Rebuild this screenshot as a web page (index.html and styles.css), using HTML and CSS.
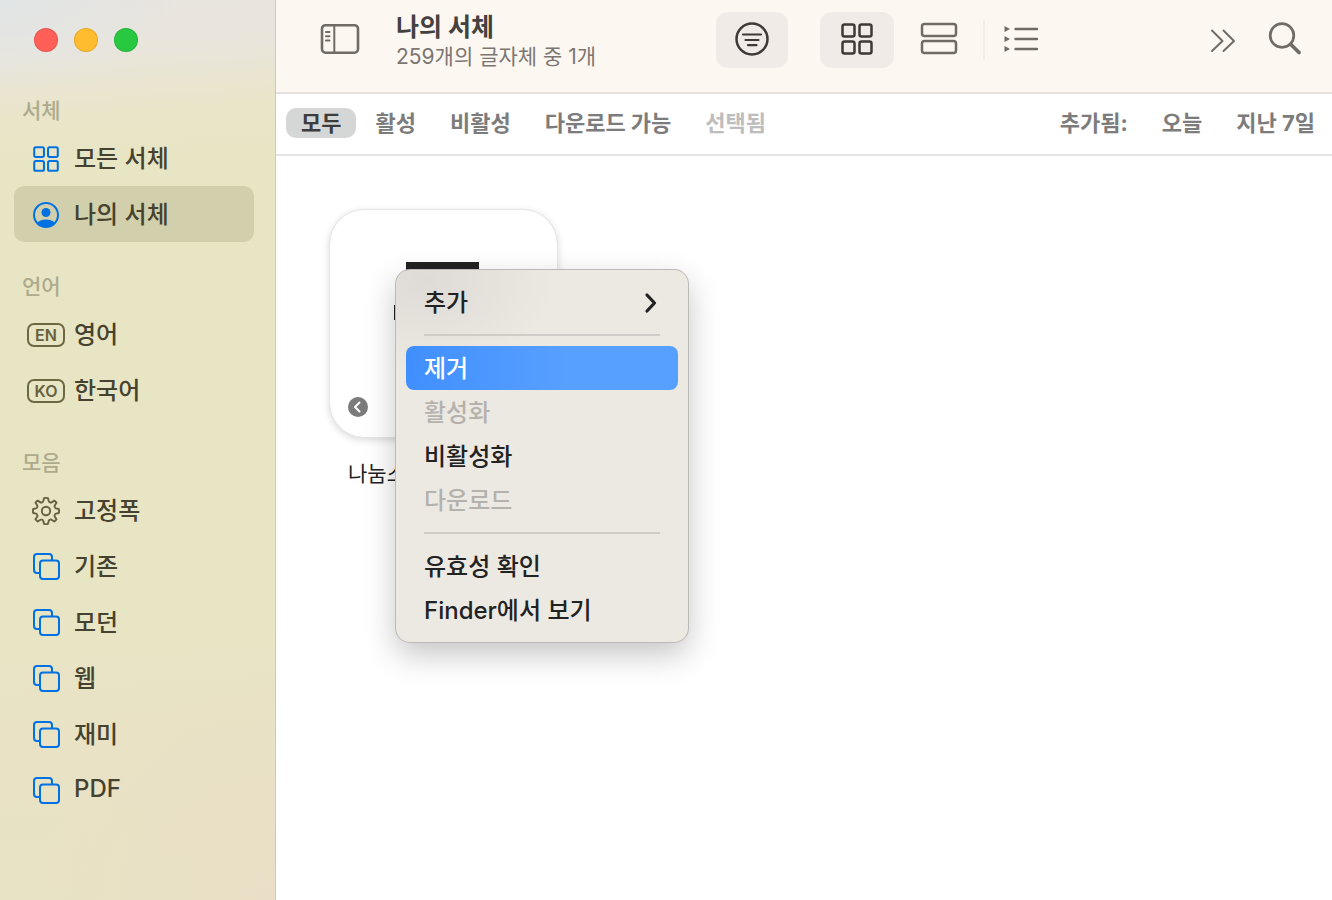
FILE: index.html
```html
<!DOCTYPE html>
<html lang="ko">
<head>
<meta charset="utf-8">
<meta name="viewport" content="width=device-width, initial-scale=1">
<title>나의 서체</title>
<link rel="stylesheet" href="styles.css">
</head>
<body>
<svg class="defs" width="0" height="0" aria-hidden="true">
  <symbol id="grid" viewBox="0 0 32 32">
    <rect x="1.5" y="1.5" width="12" height="12" rx="2"/><rect x="18.5" y="1.5" width="12" height="12" rx="2"/>
    <rect x="1.5" y="18.5" width="12" height="12" rx="2"/><rect x="18.5" y="18.5" width="12" height="12" rx="2"/>
  </symbol>
  <symbol id="stack" viewBox="0 0 28 28">
    <path d="M7 20H5A3 3 0 0 1 2 17V4A3 3 0 0 1 5 1H17A3 3 0 0 1 20 4V7"/>
    <rect x="8" y="7.500" width="19" height="18.500" rx="3"/>
  </symbol>
</svg>
<div class="window">
  <aside class="sidebar">
    <div class="lights">
      <button class="light close" aria-label="닫기"></button>
      <button class="light minimize" aria-label="최소화"></button>
      <button class="light expand" aria-label="확대"></button>
    </div>
    <nav class="nav">
      <section class="group">
        <h2 class="group-title">서체</h2>
        <a class="item" href="#"><span class="item-icon blue"><svg width="26" height="26" stroke-width="2.500"><use href="#grid"/></svg></span><span class="label">모든 서체</span></a>
        <a class="item selected" href="#" aria-current="page"><span class="item-icon blue"><svg width="26" height="26" viewBox="0 0 26 26" stroke-width="2"><circle cx="13" cy="13" r="12"/><g class="solid"><circle cx="13" cy="10.500" r="4.500"/><path d="M4 21C6 18.500 9.500 17.500 13 17.500S20 18.500 22 21C19.500 24 16.500 25.300 13 25.300S6.500 24 4 21Z"/></g></svg></span><span class="label">나의 서체</span></a>
      </section>
      <section class="group">
        <h2 class="group-title">언어</h2>
        <a class="item" href="#"><span class="item-icon"><span class="lang">EN</span></span><span class="label">영어</span></a>
        <a class="item" href="#"><span class="item-icon"><span class="lang">KO</span></span><span class="label">한국어</span></a>
      </section>
      <section class="group">
        <h2 class="group-title">모음</h2>
        <a class="item" href="#"><span class="item-icon olive"><svg width="28" height="28" viewBox="0 0 28 28" stroke-width="1.900"><circle cx="14" cy="14" r="4.200"/><path d="M12 1.200Q14 .6 16 1.200L16.700 4Q17 5 18 5.400T20 5.100L22.300 3.600Q23.800 4.600 24.500 5.700L23 8Q22.300 9 22.700 10T24 11.300L26.800 12Q27.400 14 26.800 16L24 16.700Q23 17 22.700 18T23 20L24.500 22.300Q23.600 23.700 22.300 24.500L20 23Q19 22.300 18 22.700T16.700 24L16 26.800Q14 27.400 12 26.800L11.300 24Q11 23 10 22.700T8 23L5.700 24.500Q4.300 23.600 3.500 22.300L5 20Q5.700 19 5.300 18T4 16.700L1.200 16Q.6 14 1.200 12L4 11.300Q5 11 5.300 10T5 8L3.500 5.700Q4.400 4.300 5.700 3.600L8 5.100Q9 5.800 10 5.400T11.300 4Z"/></svg></span><span class="label">고정폭</span></a>
        <a class="item" href="#"><span class="item-icon blue"><svg width="28" height="28" stroke-width="2"><use href="#stack"/></svg></span><span class="label">기존</span></a>
        <a class="item" href="#"><span class="item-icon blue"><svg width="28" height="28" stroke-width="2"><use href="#stack"/></svg></span><span class="label">모던</span></a>
        <a class="item" href="#"><span class="item-icon blue"><svg width="28" height="28" stroke-width="2"><use href="#stack"/></svg></span><span class="label">웹</span></a>
        <a class="item" href="#"><span class="item-icon blue"><svg width="28" height="28" stroke-width="2"><use href="#stack"/></svg></span><span class="label">재미</span></a>
        <a class="item" href="#"><span class="item-icon blue"><svg width="28" height="28" stroke-width="2"><use href="#stack"/></svg></span><span class="label">PDF</span></a>
      </section>
    </nav>
  </aside>
  <main class="main">
    <header class="toolbar">
      <button class="tool small" aria-label="사이드바"><svg width="40" height="32" viewBox="0 0 40 32" stroke-width="2.600"><rect x="2" y="2.200" width="36" height="27.500" rx="3.500"/><path stroke-width="2" d="M14.300 2.500V29.500M6 9h3.500M6 13.200h3.500M6 17.400h3.500"/></svg></button>
      <div class="heading">
        <h1 class="title">나의 서체</h1>
        <p class="subtitle">259개의 글자체 중 1개</p>
      </div>
      <button class="tool filter on" aria-label="필터"><svg width="34" height="34" viewBox="0 0 34 34" stroke-width="2.500"><circle cx="17" cy="17" r="15.500"/><path stroke-width="2.200" d="M8 12.500h18M10.500 18h13M13 23.200h8.500"/></svg></button>
      <div class="views">
        <button class="tool on" aria-label="격자" aria-pressed="true"><svg width="32" height="32" stroke-width="2.500"><use href="#grid"/></svg></button>
        <button class="tool" aria-label="샘플"><svg width="38" height="34" viewBox="0 0 38 34" stroke-width="2.500"><rect x="2" y="2" width="34" height="12" rx="2.500"/><rect x="2" y="19" width="34" height="12" rx="2.500"/></svg></button>
        <span class="divider"></span>
        <button class="tool" aria-label="목록"><svg width="36" height="28" viewBox="0 0 36 28" stroke-width="2.400"><path d="M11.500 4h21.500M11.500 14h21.500M11.500 24h21.500"/><path class="solid" d="M.5 1 6 4 .5 7ZM.5 11 6 14l-5.500 3ZM.5 21 6 24l-5.500 3Z"/></svg></button>
      </div>
      <button class="tool small more" aria-label="더 보기"><svg width="26" height="26" viewBox="0 0 26 26" stroke-width="2"><path d="M2 4.500 12.500 15 2 25M13.500 4.500 24 15 13.500 25"/></svg></button>
      <button class="tool small" aria-label="검색"><svg width="34" height="34" viewBox="0 0 34 34" stroke-width="2.700"><circle cx="14" cy="13.500" r="11.800"/><path stroke-width="3.700" d="m22.700 22.200 8.300 8.300"/></svg></button>
    </header>
    <div class="filters">
      <button class="chip active" aria-pressed="true">모두</button>
      <button class="chip">활성</button>
      <button class="chip">비활성</button>
      <button class="chip">다운로드 가능</button>
      <button class="chip" disabled>선택됨</button>
      <span class="chip added">추가됨:</span>
      <button class="chip">오늘</button>
      <button class="chip">지난 7일</button>
    </div>
    <div class="content">
      <figure class="font">
        <div class="preview">
          <svg class="sample" width="100" height="60" viewBox="0 0 100 60"><path d="M12 0H85V16H12ZM0 43H97V58H0Z"/></svg>
          <svg class="badge" width="20" height="20" viewBox="0 0 20 20"><circle cx="10" cy="10" r="10"/><path d="m11.500 5.500-4.500 4.500 4.500 4.500"/></svg>
        </div>
        <figcaption class="caption">나눔스퀘어</figcaption>
      </figure>
      <div class="menu" role="menu">
        <button class="entry" role="menuitem"><span class="label">추가</span><svg width="16" height="20" viewBox="0 0 16 20" stroke-width="3.200"><path d="m3 3 7.500 8L3 19"/></svg></button>
        <hr class="rule">
        <button class="entry chosen" role="menuitem"><span class="label">제거</span></button>
        <button class="entry" role="menuitem" disabled><span class="label">활성화</span></button>
        <button class="entry" role="menuitem"><span class="label">비활성화</span></button>
        <button class="entry" role="menuitem" disabled><span class="label">다운로드</span></button>
        <hr class="rule">
        <button class="entry" role="menuitem"><span class="label">유효성 확인</span></button>
        <button class="entry" role="menuitem"><span class="label">Finder에서 보기</span></button>
      </div>
    </div>
  </main>
</div>
</body>
</html>
```
FILE: styles.css
```css
* { box-sizing: border-box; }

body {
  margin: 0;
  font-family: Inter, "Noto Sans CJK KR", sans-serif;
  font-size: 24px;
  color: #222;
}

button {
  margin: 0;
  padding: 0;
  border: 0;
  background: none;
  font: inherit;
  color: inherit;
}

h1, h2, p, figure { margin: 0; }

svg {
  display: block;
  fill: none;
  stroke: currentColor;
  stroke-linecap: round;
  stroke-linejoin: round;
  overflow: visible;
}

.defs { position: absolute; }
.solid { fill: currentColor; stroke: none; }
.label { padding-bottom: 3px; }

.window {
  display: flex;
  min-height: 100vh;
}

/* Sidebar */
.sidebar {
  flex: 0 0 276px;
  border-right: 1px solid #cfcda6;
  background:
    radial-gradient(ellipse 180px 90px at 0 0, #e1e5e5 0%, rgba(225, 229, 229, 0) 100%),
    radial-gradient(ellipse 240px 220px at 100% 100%, #eadfc6 0%, rgba(234, 223, 198, 0) 100%),
    linear-gradient(176deg, #e8e4e0 0, #e9e5db 60px, #e9e5c9 120px, #e8e5c4 180px, #e8e5c4 620px, #e9e2c5 740px, #e8e3c5 100%);
}

.lights {
  display: flex;
  gap: 16px;
  padding: 28px 34px 26px;
}

.light {
  width: 24px;
  height: 24px;
  border: 1px solid rgba(0, 0, 0, 0.1);
  border-radius: 50%;
}

.close { background: #ff5f57; }
.minimize { background: #febc2e; }
.expand { background: #28c840; }

.nav {
  display: flex;
  flex-direction: column;
  gap: 24px;
  padding: 12px 21px 0 14px;
}

.group-title {
  padding: 2px 8px 0;
  font-size: 21px;
  font-weight: 500;
  line-height: 38px;
  color: #aeaa8c;
}

.item {
  display: flex;
  align-items: center;
  height: 56px;
  padding-left: 12px;
  border-radius: 10px;
  font-weight: 500;
  color: #45422f;
  text-decoration: none;
}

.selected { background: #d2cfad; }

.item-icon {
  display: flex;
  justify-content: center;
  width: 40px;
  padding-top: 2px;
  margin-right: 8px;
}

.blue { color: #0071e3; }
.olive { color: #66613f; }

.lang {
  width: 38px;
  border: 2px solid #6d6844;
  border-radius: 7px;
  font-size: 16px;
  font-weight: 600;
  line-height: 20px;
  text-align: center;
  color: #66613f;
}

/* Toolbar */
.main {
  flex: 1;
  display: flex;
  flex-direction: column;
  min-width: 0;
  background: #fff;
}

.toolbar {
  display: flex;
  align-items: flex-start;
  height: 94px;
  padding: 12px 19px 0 36px;
  border-bottom: 2px solid #e4e1de;
  background: #fdf7f1;
}

.tool {
  display: flex;
  align-items: center;
  justify-content: center;
  width: 74px;
  height: 56px;
  padding-bottom: 2px;
  border-radius: 12px;
  color: #716b66;
}

.small { width: 56px; }
.filter { width: 72px; margin-right: 32px; }
.on { background: #f0ebe6; color: #3c3936; }

.heading {
  flex: 0 1 320px;
  margin-left: 28px;
  white-space: nowrap;
}

.title {
  font-size: 25px;
  font-weight: 700;
  line-height: 30px;
  color: #444240;
}

.subtitle {
  font-size: 21px;
  line-height: 30px;
  color: #7b7672;
}

.views { display: flex; align-items: center; }
.views .on { margin-right: 8px; }

.divider {
  width: 2px;
  height: 40px;
  margin-left: 7px;
  background: #f3ede8;
}

.more { margin: 0 6px 0 auto; }

/* Filter bar */
.filters {
  display: flex;
  align-items: center;
  gap: 4px;
  height: 62px;
  padding: 0 2px 2px 10px;
  border-bottom: 2px solid #e5e5e5;
}

.chip {
  padding: 0 15px;
  border-radius: 10px;
  font-size: 22px;
  font-weight: 700;
  line-height: 30px;
  white-space: nowrap;
  color: #7c7c7c;
}

.chip:disabled { color: #bdbdbd; }
.active { background: #d5d6d6; color: #3c3c3c; }
.added { margin-left: auto; }

/* Font grid */
.content {
  position: relative;
  flex: 1;
  padding: 54px;
}

.font { width: 227px; }

.preview {
  position: relative;
  display: flex;
  align-items: flex-start;
  justify-content: center;
  height: 227px;
  padding-top: 52px;
  border-radius: 34px;
  box-shadow: 0 0 0 1px #e6e6e6, 0 2px 8px rgba(0, 0, 0, 0.18);
}

.sample { fill: #222; stroke: none; }

.badge {
  position: absolute;
  left: 18px;
  bottom: 20px;
}

.badge circle { fill: #7b7b7b; stroke: none; }
.badge path { stroke: #fff; stroke-width: 2; }

.caption {
  padding: 20px 18px 0;
  font-size: 21px;
  line-height: 34px;
}

/* Context menu */
.menu {
  position: absolute;
  left: 120px;
  top: 114px;
  width: 292px;
  padding: 10px;
  border-radius: 14px;
  background:
    radial-gradient(ellipse 130px 90px at 30px 10px, #dedbd6 0%, rgba(222, 219, 214, 0) 100%),
    #ece9e3;
  box-shadow: 0 0 0 1px #bcbab7, 0 12px 32px rgba(0, 0, 0, 0.24);
}

.entry {
  display: flex;
  align-items: center;
  justify-content: space-between;
  width: 100%;
  height: 44px;
  padding: 0 18px;
  border-radius: 8px;
  font-weight: 500;
  color: #222;
}

.entry:disabled { color: #b5b2ad; }

.chosen {
  background: linear-gradient(90deg, #408fff, #58a0ff 60%);
  color: #fff;
}

.rule {
  height: 2px;
  margin: 10px 18px;
  border: 0;
  background: #cfccc7;
}
```
